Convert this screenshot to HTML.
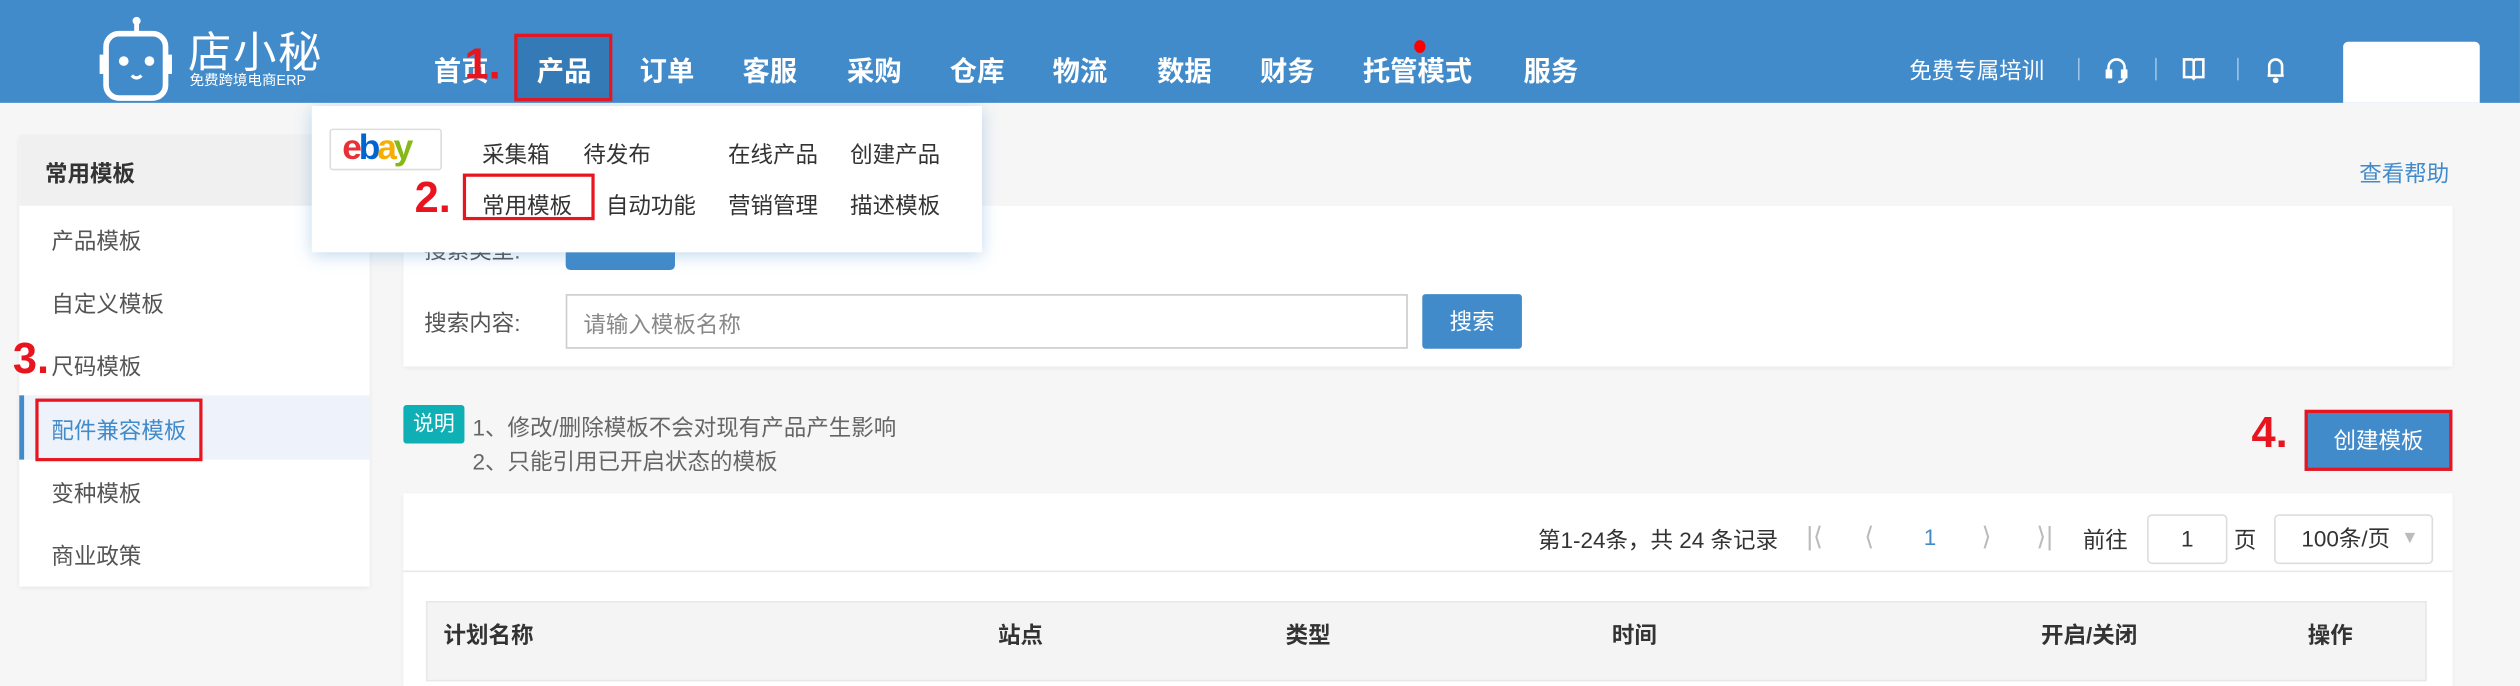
<!DOCTYPE html>
<html><head><meta charset="utf-8"><style>
*{margin:0;padding:0;box-sizing:border-box}
html,body{width:2520px;height:668px;overflow:hidden;background:#f6f6f6}
#w{position:absolute;left:0;top:0;width:1568px;height:416px;transform:scale(1.6071);transform-origin:0 0;font-family:"Liberation Sans","Noto Sans CJK SC",sans-serif;color:#555;font-size:14px}
.a{position:absolute;white-space:nowrap}
.hd{left:0;top:0;width:1568px;height:64px;background:#428bca}
.nav{top:30px;font-size:17px;font-weight:bold;color:#fff}
.red{color:#e8141e;font-weight:bold;font-size:27px}
.rb{border:2px solid #e8141e}
.side div.i{position:absolute;left:20px;font-size:14px;color:#555}
.th{font-weight:bold;color:#333;font-size:14px;top:385px}
</style></head><body><div id="w">
<div class="a hd"></div>
<svg class="a" style="left:60px;top:10px" width="50" height="54" viewBox="0 0 50 54"><line x1="25" y1="2" x2="25" y2="10" stroke="#fff" stroke-width="3"/><circle cx="25" cy="3" r="2.5" fill="#fff"/><rect x="6" y="11" width="37" height="40" rx="8" fill="none" stroke="#fff" stroke-width="3.5"/><rect x="2" y="24" width="4" height="12" fill="#fff"/><rect x="43" y="24" width="4" height="12" fill="#fff"/><circle cx="17" cy="28" r="3" fill="#fff"/><circle cx="33" cy="28" r="3" fill="#fff"/><path d="M22 37 q3 3 6 0" stroke="#fff" stroke-width="2" fill="none"/></svg>
<div class="a" style="left:117px;top:11px;font-size:27px;color:#fff;letter-spacing:1px">店小秘</div>
<div class="a" style="left:118px;top:43px;font-size:9px;color:#fff">免费跨境电商ERP</div>
<div class="a" style="left:320px;top:21px;width:61px;height:42px;background:#337ab7" ></div>
<div class="a rb" style="left:320px;top:21px;width:61px;height:42px"></div>
<div class="a nav" style="left:270px">首页</div>
<div class="a red" style="left:289px;top:25px">1.</div>
<div class="a nav" style="left:334px">产品</div>
<div class="a nav" style="left:398px">订单</div>
<div class="a nav" style="left:462px">客服</div>
<div class="a nav" style="left:527px">采购</div>
<div class="a nav" style="left:591px">仓库</div>
<div class="a nav" style="left:655px">物流</div>
<div class="a nav" style="left:720px">数据</div>
<div class="a nav" style="left:784px">财务</div>
<div class="a nav" style="left:848px">托管模式</div>
<div class="a" style="left:880px;top:25px;width:7px;height:8px;border-radius:50%;background:#f00"></div>
<div class="a nav" style="left:948px">服务</div>
<div class="a" style="left:1188px;top:34px;color:#fff;font-size:14px">免费专属培训</div>
<div class="a" style="left:1293px;top:36px;width:1px;height:14px;background:#9cc2e5"></div>
<div class="a" style="left:1341px;top:36px;width:1px;height:14px;background:#9cc2e5"></div>
<div class="a" style="left:1392px;top:36px;width:1px;height:14px;background:#9cc2e5"></div>
<svg class="a" style="left:1309px;top:34px" width="16" height="18" viewBox="0 0 16 18" fill="none" stroke="#fff" stroke-width="1.6"><path d="M3 11V8a5 5 0 0 1 10 0v3"/><rect x="2" y="10" width="2.5" height="4" fill="#fff"/><rect x="11.5" y="10" width="2.5" height="4" fill="#fff"/><path d="M13 14q0 3-4 3"/></svg>
<svg class="a" style="left:1357px;top:35px" width="16" height="16" viewBox="0 0 16 16" fill="none" stroke="#fff" stroke-width="1.6"><path d="M2 2h5l1 1 1-1h5v11H9l-1 1-1-1H2z"/><path d="M8 3v10"/></svg>
<svg class="a" style="left:1409px;top:34px" width="14" height="18" viewBox="0 0 14 18" fill="none" stroke="#fff" stroke-width="1.6"><path d="M3 13V7a4 4 0 0 1 8 0v6H2h10"/><circle cx="7" cy="16" r="1" fill="#fff"/></svg>
<div class="a" style="left:1458px;top:26px;width:85px;height:38px;background:#fff;border-radius:3px 3px 0 0"></div>

<div class="a side" style="left:12px;top:84px;width:218px;height:281px;background:#fff;box-shadow:0 1px 3px rgba(0,0,0,.08)">
<div class="a" style="left:0;top:0;width:218px;height:44px;background:#f0f0f0"></div>
<div class="a" style="left:16px;top:14px;font-weight:bold;color:#333">常用模板</div>
<div class="i" style="top:56px">产品模板</div>
<div class="i" style="top:95px">自定义模板</div>
<div class="i" style="top:134px">尺码模板</div>
<div class="a" style="left:0;top:162px;width:218px;height:40px;background:#eef2fa;border-left:3px solid #428bca"></div>
<div class="i" style="top:174px;color:#428bca">配件兼容模板</div>
<div class="i" style="top:213px">变种模板</div>
<div class="i" style="top:252px">商业政策</div>
</div>
<div class="a red" style="left:8px;top:208px">3.</div>
<div class="a rb" style="left:22px;top:248px;width:104px;height:39px"></div>

<div class="a" style="left:1468px;top:98px;color:#428bca">查看帮助</div>
<div class="a" style="left:251px;top:128px;width:1275px;height:100px;background:#fff;box-shadow:0 1px 3px rgba(0,0,0,.06)"></div>
<div class="a" style="left:264px;top:146px">搜索类型:</div>
<div class="a" style="left:352px;top:146px;width:68px;height:22px;background:#428bca;border-radius:3px"></div>
<div class="a" style="left:264px;top:191px">搜索内容:</div>
<div class="a" style="left:352px;top:183px;width:524px;height:34px;border:1px solid #ccc;background:#fff"></div>
<div class="a" style="left:363px;top:192px;color:#888">请输入模板名称</div>
<div class="a" style="left:885px;top:183px;width:62px;height:34px;background:#428bca;border-radius:2px;color:#fff;text-align:center;line-height:34px">搜索</div>

<div class="a" style="left:194px;top:66px;width:417px;height:91px;background:#fff;box-shadow:0 2px 10px rgba(66,139,202,.35)"></div>
<div class="a" style="left:205px;top:80px;width:70px;height:26px;border:1px solid #ddd;border-radius:2px;font-size:22px;font-weight:bold;letter-spacing:-2px;line-height:22px;padding-left:7px;font-family:'Liberation Sans',sans-serif"><span style="color:#e53238">e</span><span style="color:#0064d2">b</span><span style="color:#f5af02">a</span><span style="color:#86b817">y</span></div>
<div class="a" style="left:300px;top:86px;color:#333">采集箱</div>
<div class="a" style="left:363px;top:86px;color:#333">待发布</div>
<div class="a" style="left:453px;top:86px;color:#333">在线产品</div>
<div class="a" style="left:529px;top:86px;color:#333">创建产品</div>
<div class="a" style="left:300px;top:118px;color:#333">常用模板</div>
<div class="a" style="left:377px;top:118px;color:#333">自动功能</div>
<div class="a" style="left:453px;top:118px;color:#333">营销管理</div>
<div class="a" style="left:529px;top:118px;color:#333">描述模板</div>
<div class="a rb" style="left:288px;top:108px;width:82px;height:29px"></div>
<div class="a red" style="left:258px;top:108px">2.</div>

<div class="a" style="left:251px;top:252px;width:38px;height:24px;background:#0fb0b5;border-radius:2px;color:#fff;font-size:13px;text-align:center;line-height:24px">说明</div>
<div class="a" style="left:294px;top:256px;color:#666">1、修改/删除模板不会对现有产品产生影响</div>
<div class="a" style="left:294px;top:277px;color:#666">2、只能引用已开启状态的模板</div>
<div class="a red" style="left:1401px;top:254px">4.</div>
<div class="a" style="left:1434px;top:255px;width:92px;height:38px;background:#428bca;border:2px solid #e8141e;color:#fff;text-align:center;line-height:34px">创建模板</div>

<div class="a" style="left:251px;top:307px;width:1275px;height:120px;background:#fff;box-shadow:0 1px 3px rgba(0,0,0,.06)"></div>
<div class="a" style="left:957px;top:326px;color:#333">第1-24条，共 24 条记录</div>
<div class="a" style="left:1124px;top:324px;color:#bbb;font-size:16px">|&#10216;</div>
<div class="a" style="left:1160px;top:324px;color:#bbb;font-size:16px">&#10216;</div>
<div class="a" style="left:1197px;top:326px;color:#428bca">1</div>
<div class="a" style="left:1233px;top:324px;color:#bbb;font-size:16px">&#10217;</div>
<div class="a" style="left:1267px;top:324px;color:#bbb;font-size:16px">&#10217;|</div>
<div class="a" style="left:1296px;top:326px;color:#333">前往</div>
<div class="a" style="left:1336px;top:320px;width:50px;height:31px;border:1px solid #ddd;border-radius:3px;text-align:center;line-height:29px;color:#333">1</div>
<div class="a" style="left:1390px;top:326px;color:#333">页</div>
<div class="a" style="left:1415px;top:320px;width:99px;height:31px;border:1px solid #ddd;border-radius:3px;line-height:29px;padding-left:16px;color:#333">100条/页<span style="position:absolute;right:8px;top:0;color:#bbb;font-size:11px">▼</span></div>
<div class="a" style="left:251px;top:355px;width:1275px;height:1px;background:#e8e8e8"></div>
<div class="a" style="left:265px;top:374px;width:1245px;height:50px;background:#f4f4f4;border:1px solid #e8e8e8"></div>
<div class="a th" style="left:276px">计划名称</div>
<div class="a th" style="left:621px">站点</div>
<div class="a th" style="left:800px">类型</div>
<div class="a th" style="left:1003px">时间</div>
<div class="a th" style="left:1270px">开启/关闭</div>
<div class="a th" style="left:1436px">操作</div>
</div></body></html>
